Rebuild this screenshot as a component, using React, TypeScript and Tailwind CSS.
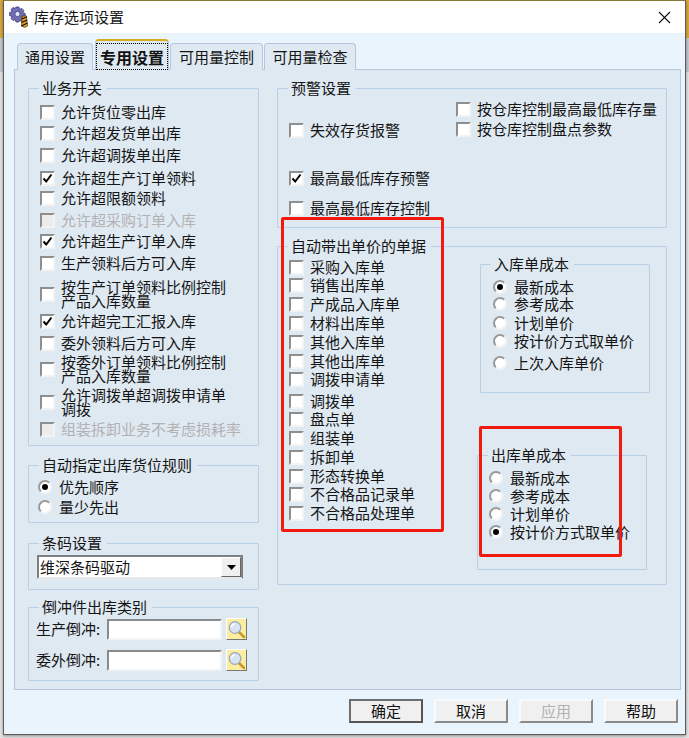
import type { ReactNode } from "react";
import clsx from "clsx";

type RowProps = {
  label: string;
  checked?: boolean;
  disabled?: boolean;
  className?: string;
};

function Check({ label, checked, disabled, className }: RowProps) {
  return (
    <div className={clsx("flex h-[20px] items-center gap-[6px]", className)}>
      <span
        className={clsx(
          "flex h-[15px] w-[15px] shrink-0 items-center justify-center border-2 border-t-[#8e8e8e] border-l-[#8e8e8e] border-r-[#f3f3f3] border-b-[#f3f3f3]",
          disabled ? "bg-[#ececec]" : "bg-white"
        )}
      >
        {checked && (
          <svg width="11" height="11" viewBox="0 0 11 11">
            <path d="M1.5 5.5 L4.2 8.5 L9.5 1.5" fill="none" stroke="#000" strokeWidth="2" />
          </svg>
        )}
      </span>
      <span
        className={clsx(
          "whitespace-pre-line leading-[14px]",
          disabled ? "text-[#b2b2b2]" : "text-[#151515]"
        )}
      >
        {label}
      </span>
    </div>
  );
}

function Radio({ label, checked, className }: RowProps) {
  return (
    <div className={clsx("flex h-[18px] items-center gap-[7px]", className)}>
      <span className="flex h-[14px] w-[14px] shrink-0 items-center justify-center rounded-full border-2 border-t-[#9a9a9a] border-l-[#9a9a9a] border-r-[#f3f3f3] border-b-[#f3f3f3] bg-white">
        {checked && <span className="h-[6px] w-[6px] rounded-full bg-black" />}
      </span>
      <span className="whitespace-nowrap leading-[16px] text-[#151515]">{label}</span>
    </div>
  );
}

function Group({ title, className, children }: { title: string; className?: string; children: ReactNode }) {
  return (
    <fieldset className={clsx("rounded-[1px] border border-[#b9cfe6]", className)}>
      <legend className="ml-[10px] pl-[3px] pr-[5px] leading-[20px] text-[#151515]">{title}</legend>
      {children}
    </fieldset>
  );
}

function GearIcon() {
  return (
    <svg width="21" height="22" viewBox="0 0 21 22" className="shrink-0">
      <g fill="#6f6fb4" stroke="#3d3d78" strokeWidth="0.8">
        <path d="M8 1h3l.6 2.4 2.2-1 2 2-1 2.2 2.4.8v3l-2.4.7 1 2.2-2 2-2.2-1L11 16H8l-.7-2.4-2.2 1-2-2 1-2.2L1.6 9.600V6.500L4 5.700l-1-2.200 2-2 2.200 1z" />
      </g>
      <circle cx="9.500" cy="8" r="2.600" fill="#e6e6f5" stroke="#3d3d78" strokeWidth="0.8" />
      <path d="M14 10h4.500l1 10-3 1.500-3-1.500z" fill="#e8a020" stroke="#222" strokeWidth="0.6" />
      <path d="M13.800 13l5-2M13.600 16.500l5.500-2.500M13.500 20l6-3" stroke="#111" strokeWidth="1.300" />
    </svg>
  );
}

function SearchButton() {
  return (
    <span className="ml-[4px] flex h-[22px] w-[21px] items-center justify-center border border-t-white border-l-white border-r-[#777] border-b-[#777] bg-[#fbeea0]">
      <svg width="19" height="19" viewBox="0 0 19 19">
        <path d="M11.500 11.500L17 17" stroke="#c79a2a" strokeWidth="2.600" strokeLinecap="round" />
        <circle cx="8" cy="7.500" r="5.800" fill="#d8e4f4" stroke="#9aa7bb" strokeWidth="1.200" />
        <path d="M4.500 7a3.800 3.800 0 0 1 3.500-3.200" fill="none" stroke="#fff" strokeWidth="1.300" />
      </svg>
    </span>
  );
}

function TextBox() {
  return <span className="h-[21px] w-[115px] border-2 border-t-[#8a8a8a] border-l-[#8a8a8a] border-r-[#f3f3f3] border-b-[#f3f3f3] bg-white" />;
}

function Tab({ label, className }: { label: string; className: string }) {
  return (
    <div
      className={clsx(
        "flex h-[27px] items-center justify-center rounded-t-[4px] border border-b-0 border-[#b5c7da] bg-[#dfe9f2] text-[#151515]",
        className
      )}
    >
      {label}
    </div>
  );
}

function Button({ label, primary, disabled }: { label: string; primary?: boolean; disabled?: boolean }) {
  return (
    <div
      className={clsx(
        "flex h-[24px] w-[74px] items-center justify-center bg-[#f0f0f0] border-2",
        primary
          ? "border-[#6e6e6e] border-r-[#555] border-b-[#555]"
          : "border-t-[#fafafa] border-l-[#fafafa] border-r-[#8a8a8a] border-b-[#8a8a8a]",
        disabled ? "text-[#b0b0b0]" : "text-[#111]"
      )}
    >
      {label}
    </div>
  );
}

export default function App() {
  return (
    <div className="relative h-[738px] w-[689px] overflow-hidden bg-[linear-gradient(#d9a83c_0,#d9a83c_38px,#c3c8ce_38px,#c3c8ce_72px,#e4e4e4_72px)] font-['Noto_Sans_CJK_SC','Liberation_Sans',sans-serif] text-[15px]">
      <div className="ml-[3px] flex h-[735px] w-[683px] flex-col border border-[#5c5c5c] border-t-[#8a7836] bg-[#e9f4fd] shadow-[0_1px_3px_rgba(0,0,0,0.4)]">
        {/* Title bar */}
        <div className="flex h-[32px] shrink-0 items-center bg-white pl-[4px] pr-[14px]">
          <GearIcon />
          <span className="ml-[5px] text-[#151515]">库存选项设置</span>
          <svg width="13" height="13" viewBox="0 0 13 13" className="ml-auto">
            <path d="M1 1L12 12M12 1L1 12" stroke="#111" strokeWidth="1.100" />
          </svg>
        </div>

        {/* Tabs */}
        <div className="relative z-10 -mb-px flex h-[37px] shrink-0 items-end pl-[13px]">
          <Tab label="通用设置" className="w-[76px]" />
          <div className="ml-[2px] flex h-[31px] w-[74px] items-end rounded-t-[4px] border-t-2 border-x border-[#d6ae1e] border-x-[#b5c7da] bg-[#dfe9f2]">
            <div className="flex h-[27px] w-full items-center justify-center border border-dotted border-black text-[16px] font-bold text-[#111]">
              专用设置
            </div>
          </div>
          <Tab label="可用量控制" className="ml-px w-[93px]" />
          <Tab label="可用量检查" className="ml-px w-[92px]" />
        </div>

        {/* Tab page */}
        <div className="ml-[10px] flex h-[621px] w-[667px] shrink-0 gap-[18px] border border-[#b5c7da] bg-[#dfe9f2] pl-[13px] pt-[8px]">
          {/* Left column */}
          <div className="flex w-[231px] shrink-0 flex-col">
            <Group title="业务开关" className="h-[368px]">
              <div className="pl-[11px]">
                <Check className="mt-[4px]" label="允许货位零出库" />
                <Check className="mt-[1px]" label="允许超发货单出库" />
                <Check className="mt-[2px]" label="允许超调拨单出库" />
                <Check className="mt-[3px]" label="允许超生产订单领料" checked />
                <Check label="允许超限额领料" />
                <Check className="mt-[2px]" label="允许超采购订单入库" disabled />
                <Check className="mt-[1px]" label="允许超生产订单入库" checked />
                <Check className="mt-[2px]" label="生产领料后方可入库" />
                <Check className="mt-[11px]" label={"按生产订单领料比例控制\n产品入库数量"} />
                <Check className="mt-[7px]" label="允许超完工汇报入库" checked />
                <Check className="mt-[2px]" label="委外领料后方可入库" />
                <Check className="mt-[6px]" label={"按委外订单领料比例控制\n产品入库数量"} />
                <Check className="mt-[13px]" label={"允许调拨单超调拨申请单\n调拨"} />
                <Check className="mt-[7px]" label="组装拆卸业务不考虑损耗率" disabled />
              </div>
            </Group>

            <Group title="自动指定出库货位规则" className="mt-[9px] h-[68px]">
              <div className="pl-[9px]">
                <Radio className="mt-[3px]" label="优先顺序" checked />
                <Radio className="mt-[2px]" label="量少先出" />
              </div>
            </Group>

            <Group title="条码设置" className="mt-[10px] h-[57px]">
              <div className="ml-[8px] mt-[2px] flex h-[24px] w-[206px] items-center justify-between border-2 border-t-[#808080] border-l-[#808080] border-r-[#808080] border-b-[#e8e8e8] bg-white pl-[1px]">
                <span className="text-[#151515]">维深条码驱动</span>
                <span className="flex h-[20px] w-[20px] items-center justify-center border border-t-white border-l-white border-r-[#666] border-b-[#666] bg-[#f0f0f0]">
                  <svg width="9" height="5" viewBox="0 0 9 5">
                    <path d="M0 0H9L4.500 5z" fill="#000" />
                  </svg>
                </span>
              </div>
            </Group>

            <Group title="倒冲件出库类别" className="mt-[7px] h-[84px]">
              <div className="pl-[7px]">
                <div className="mt-[1px] flex h-[22px] items-center">
                  <span className="w-[71px] text-[#151515]">生产倒冲:</span>
                  <TextBox />
                  <SearchButton />
                </div>
                <div className="mt-[9px] flex h-[22px] items-center">
                  <span className="w-[71px] text-[#151515]">委外倒冲:</span>
                  <TextBox />
                  <SearchButton />
                </div>
              </div>
            </Group>
          </div>

          {/* Right column */}
          <div className="flex w-[390px] shrink-0 flex-col">
            <Group title="预警设置" className="h-[150px]">
              <div className="flex">
                <div className="w-[178px] shrink-0 pl-[11px]">
                  <Check className="mt-[22px]" label="失效存货报警" />
                  <Check className="mt-[28px] whitespace-nowrap" label="最高最低库存预警" checked />
                  <Check className="mt-[10px] whitespace-nowrap" label="最高最低库存控制" />
                </div>
                <div>
                  <Check className="mt-px whitespace-nowrap" label="按仓库控制最高最低库存量" />
                  <Check label="按仓库控制盘点参数" />
                </div>
              </div>
            </Group>

            <Group title="自动带出单价的单据" className="mt-[8px] h-[349px]">
              <div className="flex">
                <div className="w-[199px] shrink-0 pl-[11px]">
                  <Check className="mt-[1px]" label="采购入库单" />
                  <Check className="-mt-[2px]" label="销售出库单" />
                  <Check className="-mt-px" label="产成品入库单" />
                  <Check className="-mt-px" label="材料出库单" />
                  <Check className="-mt-px" label="其他入库单" />
                  <Check className="-mt-px" label="其他出库单" />
                  <Check className="-mt-[2px]" label="调拨申请单" />
                  <Check className="mt-[2px]" label="调拨单" />
                  <Check className="-mt-[2px]" label="盘点单" />
                  <Check className="-mt-px" label="组装单" />
                  <Check className="-mt-px" label="拆卸单" />
                  <Check className="-mt-px" label="形态转换单" />
                  <Check className="-mt-[2px]" label="不合格品记录单" />
                  <Check className="-mt-px" label="不合格品处理单" />
                </div>
                <div className="flex flex-col">
                  <Group title="入库单成本" className="-mt-[2px] ml-[3px] h-[139px] w-[170px]">
                    <div className="pl-[12px]">
                      <Radio className="mt-[4px]" label="最新成本" checked />
                      <Radio className="-mt-px" label="参考成本" />
                      <Radio className="mt-px" label="计划单价" />
                      <Radio label="按计价方式取单价" />
                      <Radio className="mt-[4px]" label="上次入库单价" />
                    </div>
                  </Group>
                  <Group title="出库单成本" className="mt-[52px] h-[125px] w-[170px]">
                    <div className="pl-[11px]">
                      <Radio className="mt-[4px]" label="最新成本" />
                      <Radio label="参考成本" />
                      <Radio label="计划单价" />
                      <Radio label="按计价方式取单价" checked />
                    </div>
                  </Group>
                </div>
              </div>
            </Group>
          </div>
        </div>

        {/* Footer buttons */}
        <div className="mt-[9px] flex justify-end gap-[11px] pr-[7px]">
          <Button label="确定" primary />
          <Button label="取消" />
          <Button label="应用" disabled />
          <Button label="帮助" />
        </div>
      </div>

      {/* Red annotation boxes drawn over the screenshot */}
      <div className="absolute left-[281px] top-[217px] h-[315px] w-[163px] rounded-[2px] border-[3px] border-[#f2190f]" />
      <div className="absolute left-[479px] top-[426px] h-[131px] w-[143px] rounded-[2px] border-[3px] border-[#f2190f]" />
    </div>
  );
}
